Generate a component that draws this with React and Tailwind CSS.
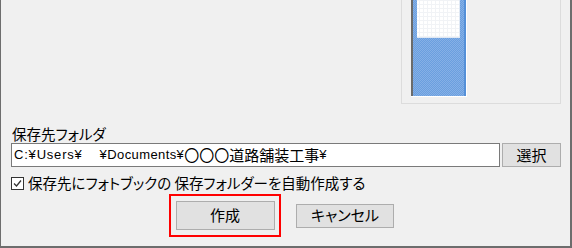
import React from "react";

const jp = { fontFamily: '"Noto Sans CJK JP", "Noto Sans", sans-serif' };

function BookImage() {
  return (
    <svg width="56" height="97" viewBox="0 0 56 97" className="block">
      <defs>
        <pattern id="chk" width="2" height="2" patternUnits="userSpaceOnUse">
          <rect width="2" height="2" fill="#86b0e6" />
          <rect width="1" height="1" fill="#6a9fdf" />
          <rect x="1" y="1" width="1" height="1" fill="#6a9fdf" />
        </pattern>
        <pattern id="grid" width="4" height="4" patternUnits="userSpaceOnUse">
          <rect width="4" height="4" fill="#ffffff" />
          <rect width="4" height="1" fill="#f1f3f6" />
          <rect width="1" height="4" fill="#f1f3f6" />
        </pattern>
      </defs>
      <rect x="0" y="0" width="56" height="97" fill="#ffffff" />
      <rect x="0" y="0" width="2" height="96" fill="#6b6b6b" />
      <rect x="2" y="0" width="53" height="96" fill="url(#chk)" />
      <rect x="53" y="0" width="2" height="96" fill="#5590d8" />
      <rect x="6" y="0" width="43" height="38" fill="#dfe8f4" />
      <rect x="6" y="0" width="42" height="37" fill="url(#grid)" />
    </svg>
  );
}

function WinButton({ children, className }) {
  return (
    <div
      className={
        "flex items-center justify-center border border-[#adadad] bg-[#e1e1e1] text-[15px] text-black " +
        className
      }
      style={jp}
    >
      {children}
    </div>
  );
}

export default function App() {
  return (
    <div className="w-[572px] h-[248px] bg-[#f0f0f0] border-l border-r-2 border-b-2 border-[#6d6d6d] overflow-hidden flex flex-col pl-[10px] pr-[9px] text-black [font-feature-settings:'palt']">
      <div className="h-[104px] flex justify-end">
        <div className="w-[160px] h-[104px] border-l border-r border-b border-[#dcdcdc] pl-[9px]">
          <BookImage />
        </div>
      </div>

      <div className="mt-[20px] h-[19px] pl-[1px] text-[14.5px] leading-[19px]" style={jp}>
        保存先フォルダ
      </div>

      <div className="flex gap-[2px] h-[24px]">
        <div className="w-[489px] h-[24px] border border-[#7a7a7a] bg-white flex items-center pl-[2px] whitespace-pre text-[13px]">
          <span style={{ fontFamily: '"Liberation Sans", sans-serif' }} className="tracking-[0.8px]">
            C:¥Users¥
          </span>
          <span className="w-[17px]"></span>
          <span style={{ fontFamily: '"Liberation Sans", sans-serif' }} className="tracking-[0.4px]">
            ¥Documents¥
          </span>
          <span className="text-[15px] [font-feature-settings:normal]" style={jp}>
            〇〇〇道路舗装工事
          </span>
          <span style={{ fontFamily: '"Liberation Sans", sans-serif' }}>¥</span>
        </div>
        <WinButton className="w-[59px] h-[24px]">選択</WinButton>
      </div>

      <div className="mt-[6px] h-[20px] flex items-center" style={jp}>
        <div className="w-[13px] h-[13px] border border-[#333333] bg-white flex items-center justify-center">
          <svg width="11" height="11" viewBox="0 0 11 11">
            <path d="M2 5.5 L4.5 8 L9 2.5" fill="none" stroke="#333333" strokeWidth="1.3" />
          </svg>
        </div>
        <span className="ml-[4px] text-[14.5px] leading-[20px]">
          保存先にフォトブックの 保存フォルダーを自動作成する
        </span>
      </div>

      <div className="mt-[1px] flex items-center pl-[158px]">
        <div className="w-[112px] h-[43px] border-2 border-[#ff0000] flex items-center justify-center">
          <WinButton className="w-[99px] h-[29px]">作成</WinButton>
        </div>
        <WinButton className="ml-[15px] w-[98px] h-[24px]">キャンセル</WinButton>
      </div>
    </div>
  );
}
